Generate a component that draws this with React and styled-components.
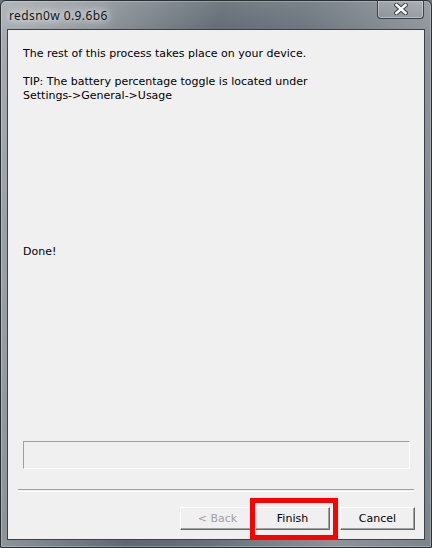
import React from 'react';
import styled, {createGlobalStyle} from 'styled-components';

const GlobalStyle = createGlobalStyle`
    html, body {
        margin: 0;
        padding: 0;
        background: #6b737b;
    }
`;

const Window = styled.div`
    box-sizing: border-box;
    width: 432px;
    height: 548px;
    display: flex;
    flex-direction: column;
    padding: 0 6px 7px 6px;
    border: 1px solid #2b3035;
    border-radius: 6px 6px 2px 2px;
    background:
        linear-gradient(180deg, rgba(255, 255, 255, 0.12) 0px, rgba(255, 255, 255, 0) 40px),
        linear-gradient(100deg, #a7adb2 0%, #8d949a 18%, #5f6871 42%, #68717a 58%, #8c9399 82%, #7c848b 100%);
    box-shadow: inset 0 0 0 1px rgba(255, 255, 255, 0.25);
    font-family: 'DejaVu Sans', Verdana, sans-serif;
    overflow: hidden;
`;

const TitleBar = styled.div`
    height: 28px;
    display: flex;
    align-items: flex-start;
    justify-content: space-between;
`;

const Title = styled.div`
    margin: 8px 0 0 2px;
    font-family: 'Noto Sans', 'Liberation Sans', sans-serif;
    font-size: 12px;
    line-height: 14px;
    letter-spacing: 0.4px;
    color: #141414;
    text-shadow:
        0 0 6px rgba(255, 255, 255, 0.95),
        0 0 12px rgba(255, 255, 255, 0.85),
        0 0 20px rgba(255, 255, 255, 0.7);
`;

const CloseButton = styled.div`
    box-sizing: border-box;
    width: 47px;
    height: 19px;
    margin-top: -1px;
    margin-right: 1px;
    display: flex;
    align-items: center;
    justify-content: center;
    border: 1px solid #3b4147;
    border-top: none;
    border-radius: 0 0 4px 4px;
    background: linear-gradient(180deg, rgba(255, 255, 255, 0.18), rgba(255, 255, 255, 0.05));
    box-shadow: inset 0 0 0 1px rgba(255, 255, 255, 0.35);
`;

const Client = styled.div`
    flex: 1;
    display: flex;
    flex-direction: column;
    border: 1px solid #3a4148;
    background: #f0f0f0;
    color: #000;
    font-size: 11px;
    line-height: 13px;
`;

const Body = styled.div`
    flex: 1;
    padding: 17px 15px 0 15px;
`;

const Line = styled.div`
    margin-top: ${(p) => p.$top || 0}px;
    line-height: ${(p) => p.$lh || 13}px;
`;

const ProgressBox = styled.div`
    height: 28px;
    box-sizing: border-box;
    margin: 0 14px 20px 15px;
    border: 1px solid;
    border-color: #a0a0a0 #ffffff #ffffff #a0a0a0;
`;

const Separator = styled.div`
    height: 1px;
    margin: 0 10px 15px 10px;
    border-top: 1px solid #a0a0a0;
    border-bottom: 1px solid #ffffff;
`;

const ButtonRow = styled.div`
    display: flex;
    justify-content: flex-end;
    padding: 0 9px 9px 0;
`;

const Button = styled.div`
    position: relative;
    box-sizing: border-box;
    width: 75px;
    height: 23px;
    margin-left: ${(p) => p.$gap || 0}px;
    display: flex;
    align-items: center;
    justify-content: center;
    background: #f0f0f0;
    color: ${(p) => (p.$disabled ? '#a0a0a0' : '#000')};
    border-top: 1px solid #ffffff;
    border-left: 1px solid #ffffff;
    border-right: 1px solid #696969;
    border-bottom: 1px solid #696969;
    box-shadow: inset -1px -1px 0 #a0a0a0;
    padding-bottom: 1px;
`;

const Highlight = styled.div`
    position: absolute;
    left: -6px;
    top: -10px;
    width: 88px;
    height: 42px;
    box-sizing: border-box;
    border: 5px solid #ff0000;
    pointer-events: none;
`;

const CloseIcon = () => (
    <svg width="14" height="12" viewBox="0 0 14 12">
        <path d="M2.5 2 L11.5 10 M11.5 2 L2.5 10" stroke="#3a3f44" strokeWidth="4.4" strokeLinecap="square" />
        <path d="M2.5 2 L11.5 10 M11.5 2 L2.5 10" stroke="#ffffff" strokeWidth="2.5" strokeLinecap="square" />
    </svg>
);

export default function App() {
    return (
        <>
            <GlobalStyle />
            <Window>
                <TitleBar>
                    <Title>redsn0w 0.9.6b6</Title>
                    <CloseButton>
                        <CloseIcon />
                    </CloseButton>
                </TitleBar>
                <Client>
                    <Body>
                        <Line>The rest of this process takes place on your device.</Line>
                        <Line $top={15} $lh={14}>TIP: The battery percentage toggle is located under</Line>
                        <Line $lh={14}>Settings-&gt;General-&gt;Usage</Line>
                        <Line $top={142}>Done!</Line>
                    </Body>
                    <ProgressBox />
                    <Separator />
                    <ButtonRow>
                        <Button $disabled>&lt; Back</Button>
                        <Button>
                            Finish
                            <Highlight />
                        </Button>
                        <Button $gap={10}>Cancel</Button>
                    </ButtonRow>
                </Client>
            </Window>
        </>
    );
}
